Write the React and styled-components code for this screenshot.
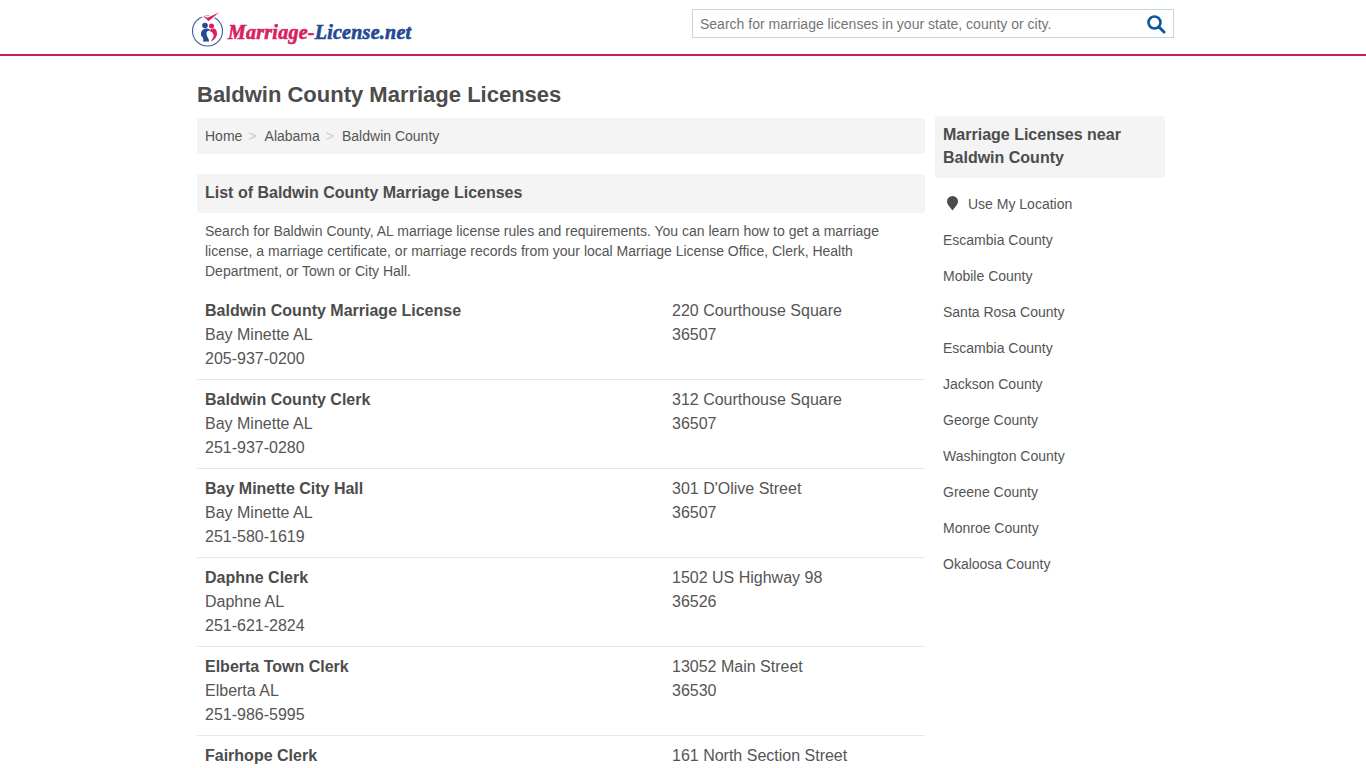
import React from "react";
import styled, { createGlobalStyle } from "styled-components";

const Global = createGlobalStyle`
  html, body { margin: 0; padding: 0; background: #fff; }
  body { font-family: "Liberation Sans", Arial, sans-serif; color: #4c4c4c; height: 768px; overflow: hidden; }
  * { box-sizing: border-box; }
`;

const Header = styled.header`
  height: 56px;
  border-bottom: 2px solid #c91f5b;
`;
const HeaderInner = styled.div`
  width: 982px;
  margin: 0 auto 0 192px;
  height: 54px;
  display: flex;
  align-items: center;
  justify-content: space-between;
`;
const Logo = styled.a`
  display: flex;
  align-items: flex-start;
  width: 222px;
  height: 40px;
  margin-top: 5px;
  padding-top: 4px;
`;
const LogoText = styled.span`
  font-family: "Liberation Serif", serif;
  font-style: italic;
  font-weight: 700;
  font-size: 20px;
  line-height: 24px;
  letter-spacing: 0.25px;
  margin: 6px 0 0 4px;
  white-space: nowrap;
  color: #d81f5f;
  -webkit-text-stroke: 0.6px currentColor;
  b { color: #234a93; font-weight: 700; }
`;
const SearchBox = styled.div`
  width: 482px;
  height: 29px;
  margin-top: -7px;
  border: 1px solid #c5d6dc;
  display: flex;
  align-items: center;
  justify-content: space-between;
  padding: 0 7px;
`;
const SearchHint = styled.span`
  font-size: 14px;
  color: #757575;
`;
const Page = styled.main`
  width: 968px;
  margin-left: 197px;
  display: grid;
  grid-template-columns: 728px 230px;
  column-gap: 10px;
`;
const Title = styled.h1`
  margin: 0;
  font-size: 22px;
  line-height: 26px;
  font-weight: 700;
  color: #4c4c4c;
  padding-top: 26px;
  height: 62px;
`;
const Left = styled.div`
  min-width: 0;
`;
const Crumbs = styled.nav`
  height: 36px;
  background: #f4f4f4;
  border-radius: 3px;
  display: flex;
  align-items: center;
  padding: 0 8px;
  font-size: 14px;
`;
const Crumb = styled.a`
  color: #555;
`;
const Sep = styled.span`
  color: #ccc;
  margin: 0 8px 0 6px;
`;
const SectionHead = styled.h2`
  margin: 20px 0 0;
  height: 39px;
  background: #f4f4f4;
  border-radius: 3px;
  padding: 0 8px;
  font-size: 16px;
  line-height: 37px;
  font-weight: 700;
  color: #4c4c4c;
`;
const Intro = styled.p`
  margin: 8px 8px 0;
  font-size: 14px;
  line-height: 20px;
  color: #555;
  height: 70px;
`;
const Row = styled.article`
  display: grid;
  grid-template-columns: 467px 1fr;
  height: 89px;
  padding: 8px 8px 0;
  font-size: 16px;
  line-height: 24px;
  color: #555;
  border-bottom: 1px solid #e8e8e8;
`;
const Name = styled.strong`
  display: block;
  color: #4c4c4c;
`;
const Side = styled.aside`
  padding-top: 60px;
`;
const SideHead = styled.h3`
  margin: 0;
  height: 62px;
  background: #f4f4f4;
  border-radius: 3px;
  padding: 7px 8px 0;
  font-size: 16px;
  line-height: 23px;
  font-weight: 700;
  color: #4c4c4c;
`;
const SideList = styled.ul`
  list-style: none;
  margin: 8px 0 0;
  padding: 0;
`;
const SideItem = styled.li`
  height: 36px;
  padding-left: 8px;
  display: flex;
  align-items: center;
  gap: 8px;
  font-size: 14px;
  color: #555;
`;
const Pin = styled.svg`
  width: 15px;
  height: 15px;
  margin: -1px 0 0 2px;
`;
const Mark = styled.svg`
  flex: none;
  width: 32px;
  height: 38px;
  margin-top: -4px;
`;

const LogoMark = () => (
  <Mark viewBox="0 0 32 38" fill="none">
    <circle cx="15.500" cy="21" r="15" stroke="#3d5a9e" strokeWidth="1.100" />
    <path d="M7.500 3.500L15.500 7 31 0 16.500 12z" fill="#d81f5f" stroke="#fff" strokeWidth="1.200" />
    <circle cx="13" cy="15.500" r="2.800" fill="#234a93" />
    <circle cx="19.500" cy="16" r="2.500" fill="#d81f5f" />
    <path d="M9 24c0-4 3-5.500 6-5.500 2 0 3 1 4 2-3-.5-5 1-4.500 3.500.5 2.500 1.500 4 2.500 6v1.500h-6c.500-2 .5-3.500-1-5-1-.8-1-1.500-1-2.500z" fill="#234a93" />
    <path d="M19 30.500c2-2 3-4 2.500-6-.5-2-2.500-3-4-3.500 1-1.500 2-2.500 4-2.500 2.500 0 3.500 2.500 3.500 5 0 3-2 6-5 7.500z" fill="#d81f5f" />
  </Mark>
);

const offices = [
  ["Baldwin County Marriage License", "Bay Minette AL", "205-937-0200", "220 Courthouse Square", "36507"],
  ["Baldwin County Clerk", "Bay Minette AL", "251-937-0280", "312 Courthouse Square", "36507"],
  ["Bay Minette City Hall", "Bay Minette AL", "251-580-1619", "301 D'Olive Street", "36507"],
  ["Daphne Clerk", "Daphne AL", "251-621-2824", "1502 US Highway 98", "36526"],
  ["Elberta Town Clerk", "Elberta AL", "251-986-5995", "13052 Main Street", "36530"],
  ["Fairhope Clerk", "Fairhope AL", "251-928-2136", "161 North Section Street", "36532"],
];
const near = ["Escambia County", "Mobile County", "Santa Rosa County", "Escambia County", "Jackson County", "George County", "Washington County", "Greene County", "Monroe County", "Okaloosa County"];

export default function App() {
  return (
    <>
      <Global />
      <Header>
        <HeaderInner>
          <Logo>
            <LogoMark />
            <LogoText>Marriage-<b>License.net</b></LogoText>
          </Logo>
          <SearchBox>
            <SearchHint>Search for marriage licenses in your state, county or city.</SearchHint>
            <svg width="20" height="20" viewBox="0 0 20 20" fill="none">
              <circle cx="8.500" cy="8.500" r="6" stroke="#0f569d" strokeWidth="2.600" />
              <path d="M13 13l5 5" stroke="#0f569d" strokeWidth="3" strokeLinecap="round" />
            </svg>
          </SearchBox>
        </HeaderInner>
      </Header>
      <Page>
        <Left>
          <Title>Baldwin County Marriage Licenses</Title>
          <Crumbs>
            <Crumb>Home</Crumb><Sep>&gt;</Sep>
            <Crumb>Alabama</Crumb><Sep>&gt;</Sep>
            <Crumb>Baldwin County</Crumb>
          </Crumbs>
          <SectionHead>List of Baldwin County Marriage Licenses</SectionHead>
          <Intro>Search for Baldwin County, AL marriage license rules and requirements. You can learn how to get a marriage license, a marriage certificate, or marriage records from your local Marriage License Office, Clerk, Health Department, or Town or City Hall.</Intro>
          {offices.map((o) => (
            <Row key={o[0]}>
              <div><Name>{o[0]}</Name>{o[1]}<br />{o[2]}</div>
              <div>{o[3]}<br />{o[4]}</div>
            </Row>
          ))}
        </Left>
        <Side>
          <SideHead>Marriage Licenses near Baldwin County</SideHead>
          <SideList>
            <SideItem>
              <Pin viewBox="0 0 15 15"><path d="M7.500 14.500C5.500 11.500 2 8.500 2 5.500a5.500 5.500 0 0 1 11 0C13 8.500 9.500 11.500 7.500 14.500z" fill="#4c4c4c" /></Pin>
              Use My Location
            </SideItem>
            {near.map((n, i) => <SideItem key={i}>{n}</SideItem>)}
          </SideList>
        </Side>
      </Page>
    </>
  );
}
